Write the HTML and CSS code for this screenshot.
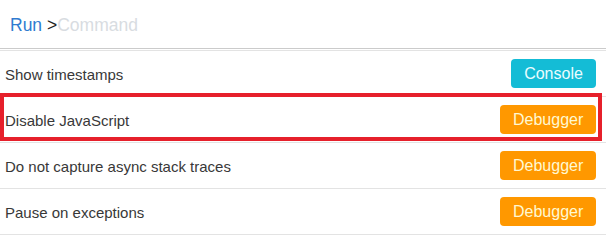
FILE: index.html
```html
<!DOCTYPE html>
<html lang="en">
<head>
    <meta charset="UTF-8">
    <meta name="viewport" content="width=device-width, initial-scale=1.0">
    <title>Command Menu</title>
    <link rel="stylesheet" href="styles.css">
</head>
<body>
    <header class="crumbs">
        <span class="crumb-run">Run</span>&nbsp;<span class="crumb-sep">&gt;</span><span class="crumb-input">Command</span>
    </header>

    <ul class="commands">
        <li class="command">
            <span class="command-name">Show timestamps</span>
            <button class="tag tag-console">Console</button>
        </li>
        <li class="command selected">
            <span class="command-name">Disable JavaScript</span>
            <button class="tag tag-debugger">Debugger</button>
        </li>
        <li class="command">
            <span class="command-name">Do not capture async stack traces</span>
            <button class="tag tag-debugger">Debugger</button>
        </li>
        <li class="command">
            <span class="command-name">Pause on exceptions</span>
            <button class="tag tag-debugger">Debugger</button>
        </li>
    </ul>
</body>
</html>
```

FILE: styles.css
```css
* {
    box-sizing: border-box;
    margin: 0;
    padding: 0;
}

body {
    font-family: "Liberation Sans", Arial, sans-serif;
    background: #fff;
    color: #383838;
    overflow: hidden;
}

.crumbs {
    height: 49px;
    padding: 3px 0 0 10px;
    display: flex;
    align-items: center;
    font-size: 17.5px;
    border-bottom: 1px solid #cbcbcb;
}

.crumb-run {
    color: #2f7bd0;
}

.crumb-sep {
    color: #222;
}

.crumb-input {
    color: #d8dce1;
}

.commands {
    list-style: none;
    margin-top: 1px;
    border-top: 1px solid #e3e3e3;
}

.command {
    height: 46px;
    padding: 0 10px 0 5px;
    display: flex;
    align-items: center;
    justify-content: space-between;
    border-bottom: 1px solid #e3e3e3;
    font-size: 15px;
}

.command-name {
    padding-top: 1px;
}

.command.selected {
    position: relative;
}

.command.selected::after {
    content: "";
    position: absolute;
    top: -4px;
    bottom: 1px;
    left: 0;
    right: 4px;
    border: 4px solid #e6202b;
}

.tag {
    height: 29px;
    padding: 0 13px;
    border: none;
    border-radius: 4px;
    font-family: inherit;
    font-size: 16px;
    cursor: pointer;
}

.tag-console {
    background: #14bcd6;
    color: #eafcff;
    width: 85px;
}

.tag-debugger {
    background: #ff9800;
    color: #fff8d2;
    width: 96px;
}
```
